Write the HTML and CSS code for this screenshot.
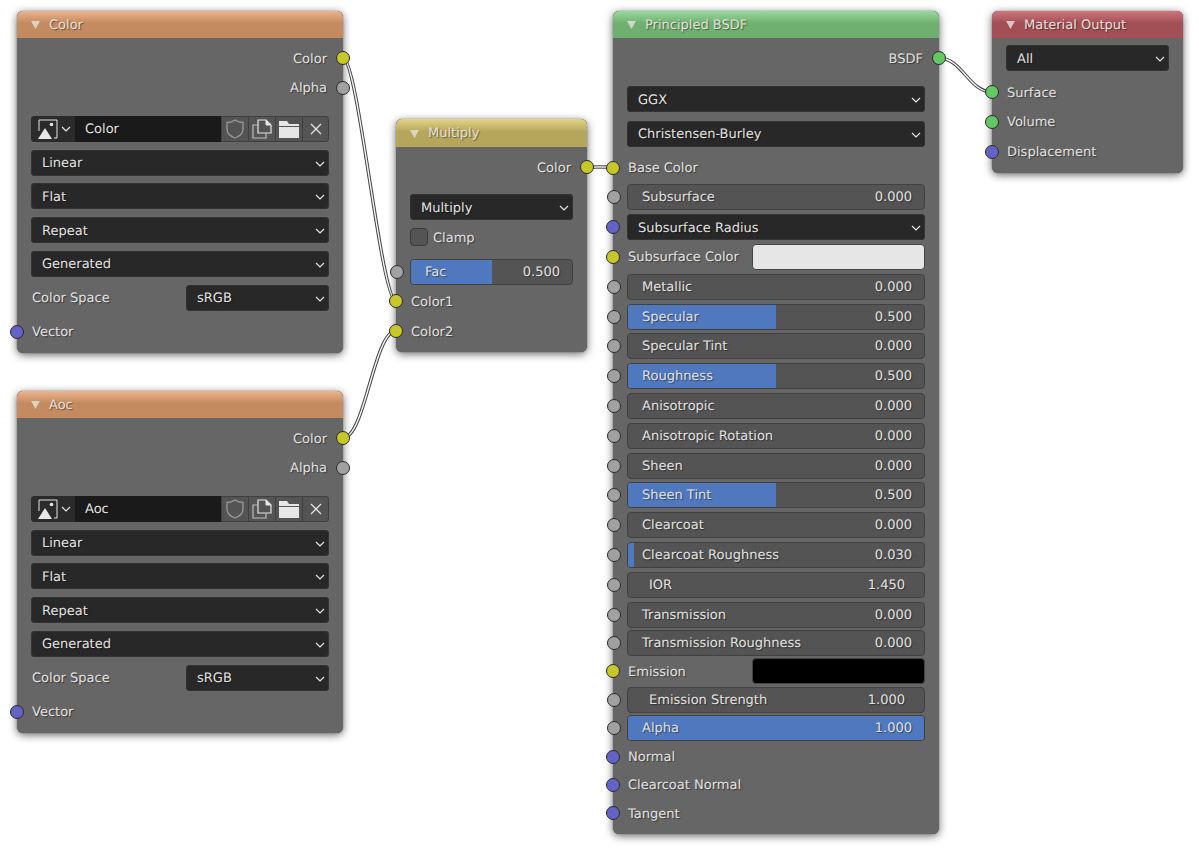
FILE: index.html
```html
<!DOCTYPE html>
<html lang="en">
<head>
    <meta charset="UTF-8">
    <title>Shader nodes</title>
    <link rel="stylesheet" href="styles.css">
</head>
<body>
    <!-- icons used more than once -->
    <svg class="defs" width="0" height="0">
        <symbol id="chev" viewBox="0 0 10 6"><path d="M1 1l4 4 4-4" fill="none" stroke="#e6e6e6" stroke-width="1.2"/></symbol>
        <symbol id="tri" viewBox="0 0 9 8"><path d="M0 0h9L4.5 8z" fill="currentColor"/></symbol>
        <symbol id="picture" viewBox="0 0 20 20"><path d="M1 12V1h18v18h-3" fill="none" stroke="#e6e6e6" stroke-width="1"/><circle cx="13.5" cy="5.5" r="1.8" fill="#e6e6e6"/><path d="M0 20L7 9l7 11z" fill="#e6e6e6"/></symbol>
        <symbol id="shield" viewBox="0 0 18 20"><path d="M1 3.5C4 3.5 7 2.5 9 1c2 1.5 5 2.500 8 2.500V10c0 4.500-4 7.500-8 9-4-1.500-8-4.500-8-9z" fill="none" stroke="#9a9a9a" stroke-width="1.300"/></symbol>
        <symbol id="copy" viewBox="0 0 20 20"><path d="M6 14V1h8l5 5v8z" fill="none" stroke="#e6e6e6" stroke-width="1.200"/><path d="M14 1v5h5" fill="#e6e6e6" stroke="#e6e6e6"/><path d="M6 6H1v13h13v-5" fill="none" stroke="#bdbdbd" stroke-width="1.200"/></symbol>
        <symbol id="folder" viewBox="0 0 20 18"><path d="M0 1h8l2 3h10v2H0zM0 7h20v11H0z" fill="#e6e6e6"/></symbol>
        <symbol id="cross" viewBox="0 0 12 12"><path d="M1 1l10 10M11 1L1 11" fill="none" stroke="#e6e6e6" stroke-width="1.300"/></symbol>
    </svg>

    <div class="canvas">
        <svg class="wires" width="1199" height="860">
            <g class="wire-edge">
                <path d="M343 58C358 58 381 301 396 301"/>
                <path d="M343 438C365 438 374 331 396 331"/>
                <path d="M587 167H613"/>
                <path d="M939 58C962 58 969 92 992 92"/>
            </g>
            <g class="wire-core">
                <path d="M343 58C358 58 381 301 396 301"/>
                <path d="M343 438C365 438 374 331 396 331"/>
                <path d="M587 167H613"/>
                <path d="M939 58C962 58 969 92 992 92"/>
            </g>
        </svg>

        <!-- image texture 1 -->
        <div class="node node-color">
            <div class="node-head head-orange"><svg class="tri"><use href="#tri"/></svg>Color</div>
            <div class="node-body">
                <div class="row out">Color<span class="socket s-out yellow"></span></div>
                <div class="row out">Alpha<span class="socket s-out gray"></span></div>
                <div class="row imgsel">
                    <div class="img-pick"><svg class="ic-pic"><use href="#picture"/></svg><svg class="chev"><use href="#chev"/></svg></div>
                    <div class="img-name">Color</div>
                    <div class="img-btn"><svg class="ic-shield"><use href="#shield"/></svg></div>
                    <div class="img-btn"><svg class="ic-copy"><use href="#copy"/></svg></div>
                    <div class="img-btn"><svg class="ic-folder"><use href="#folder"/></svg></div>
                    <div class="img-btn"><svg class="ic-cross"><use href="#cross"/></svg></div>
                </div>
                <div class="row wide drop">Linear<svg class="chev"><use href="#chev"/></svg></div>
                <div class="row wide drop">Flat<svg class="chev"><use href="#chev"/></svg></div>
                <div class="row wide drop">Repeat<svg class="chev"><use href="#chev"/></svg></div>
                <div class="row wide drop">Generated<svg class="chev"><use href="#chev"/></svg></div>
                <div class="row wide split"><span class="in-label">Color Space</span><div class="drop drop-half">sRGB<svg class="chev"><use href="#chev"/></svg></div></div>
                <div class="row wide in"><span class="socket s-in purple"></span>Vector</div>
            </div>
        </div>

        <!-- image texture 2 -->
        <div class="node node-aoc">
            <div class="node-head head-orange"><svg class="tri"><use href="#tri"/></svg>Aoc</div>
            <div class="node-body">
                <div class="row out">Color<span class="socket s-out yellow"></span></div>
                <div class="row out">Alpha<span class="socket s-out gray"></span></div>
                <div class="row imgsel">
                    <div class="img-pick"><svg class="ic-pic"><use href="#picture"/></svg><svg class="chev"><use href="#chev"/></svg></div>
                    <div class="img-name">Aoc</div>
                    <div class="img-btn"><svg class="ic-shield"><use href="#shield"/></svg></div>
                    <div class="img-btn"><svg class="ic-copy"><use href="#copy"/></svg></div>
                    <div class="img-btn"><svg class="ic-folder"><use href="#folder"/></svg></div>
                    <div class="img-btn"><svg class="ic-cross"><use href="#cross"/></svg></div>
                </div>
                <div class="row wide drop">Linear<svg class="chev"><use href="#chev"/></svg></div>
                <div class="row wide drop">Flat<svg class="chev"><use href="#chev"/></svg></div>
                <div class="row wide drop">Repeat<svg class="chev"><use href="#chev"/></svg></div>
                <div class="row wide drop">Generated<svg class="chev"><use href="#chev"/></svg></div>
                <div class="row wide split"><span class="in-label">Color Space</span><div class="drop drop-half">sRGB<svg class="chev"><use href="#chev"/></svg></div></div>
                <div class="row wide in"><span class="socket s-in purple"></span>Vector</div>
            </div>
        </div>

        <!-- mix -->
        <div class="node node-mix">
            <div class="node-head head-yellow"><svg class="tri"><use href="#tri"/></svg>Multiply</div>
            <div class="node-body">
                <div class="row out">Color<span class="socket s-out yellow"></span></div>
                <div class="row mix-first drop">Multiply<svg class="chev"><use href="#chev"/></svg></div>
                <div class="row check"><span class="box"></span><span class="check-label">Clamp</span></div>
                <div class="row field mix-fac"><span class="socket s-in gray"></span><span class="fill" style="width:50%"></span><span class="lbl">Fac</span><span class="val">0.500</span></div>
                <div class="row in"><span class="socket s-in yellow"></span>Color1</div>
                <div class="row in"><span class="socket s-in yellow"></span>Color2</div>
            </div>
        </div>

        <!-- principled -->
        <div class="node node-bsdf">
            <div class="node-head head-green"><svg class="tri"><use href="#tri"/></svg>Principled BSDF</div>
            <div class="node-body">
                <div class="row out">BSDF<span class="socket s-out green"></span></div>
                <div class="row bsdf-first drop">GGX<svg class="chev"><use href="#chev"/></svg></div>
                <div class="row wide drop">Christensen-Burley<svg class="chev"><use href="#chev"/></svg></div>
                <div class="row wide in"><span class="socket s-in yellow"></span>Base Color</div>
                <div class="row field"><span class="socket s-in gray"></span><span class="lbl">Subsurface</span><span class="val">0.000</span></div>
                <div class="row drop"><span class="socket s-in purple"></span>Subsurface Radius<svg class="chev"><use href="#chev"/></svg></div>
                <div class="row in"><span class="socket s-in yellow"></span>Subsurface Color<span class="swatch swatch-light"></span></div>
                <div class="row field"><span class="socket s-in gray"></span><span class="lbl">Metallic</span><span class="val">0.000</span></div>
                <div class="row field"><span class="socket s-in gray"></span><span class="fill" style="width:50%"></span><span class="lbl">Specular</span><span class="val">0.500</span></div>
                <div class="row field"><span class="socket s-in gray"></span><span class="lbl">Specular Tint</span><span class="val">0.000</span></div>
                <div class="row field"><span class="socket s-in gray"></span><span class="fill" style="width:50%"></span><span class="lbl">Roughness</span><span class="val">0.500</span></div>
                <div class="row field"><span class="socket s-in gray"></span><span class="lbl">Anisotropic</span><span class="val">0.000</span></div>
                <div class="row field"><span class="socket s-in gray"></span><span class="lbl">Anisotropic Rotation</span><span class="val">0.000</span></div>
                <div class="row field"><span class="socket s-in gray"></span><span class="lbl">Sheen</span><span class="val">0.000</span></div>
                <div class="row field"><span class="socket s-in gray"></span><span class="fill" style="width:50%"></span><span class="lbl">Sheen Tint</span><span class="val">0.500</span></div>
                <div class="row field"><span class="socket s-in gray"></span><span class="lbl">Clearcoat</span><span class="val">0.000</span></div>
                <div class="row field"><span class="socket s-in gray"></span><span class="fill" style="width:2%"></span><span class="lbl">Clearcoat Roughness</span><span class="val">0.030</span></div>
                <div class="row field unbounded"><span class="socket s-in gray"></span><span class="lbl">IOR</span><span class="val">1.450</span></div>
                <div class="row field"><span class="socket s-in gray"></span><span class="lbl">Transmission</span><span class="val">0.000</span></div>
                <div class="row tight field"><span class="socket s-in gray"></span><span class="lbl">Transmission Roughness</span><span class="val">0.000</span></div>
                <div class="row tight in"><span class="socket s-in yellow"></span>Emission<span class="swatch swatch-black"></span></div>
                <div class="row tight field unbounded"><span class="socket s-in gray"></span><span class="lbl">Emission Strength</span><span class="val">1.000</span></div>
                <div class="row tight field"><span class="socket s-in gray"></span><span class="fill" style="width:100%"></span><span class="lbl">Alpha</span><span class="val">1.000</span></div>
                <div class="row tight in"><span class="socket s-in purple"></span>Normal</div>
                <div class="row tight in"><span class="socket s-in purple"></span>Clearcoat Normal</div>
                <div class="row tight in"><span class="socket s-in purple"></span>Tangent</div>
            </div>
        </div>

        <!-- output -->
        <div class="node node-output">
            <div class="node-head head-red"><svg class="tri"><use href="#tri"/></svg>Material Output</div>
            <div class="node-body">
                <div class="row drop">All<svg class="chev"><use href="#chev"/></svg></div>
                <div class="row in output-surface"><span class="socket s-in green"></span>Surface</div>
                <div class="row in"><span class="socket s-in green"></span>Volume</div>
                <div class="row in"><span class="socket s-in purple"></span>Displacement</div>
            </div>
        </div>
    </div>
</body>
</html>
```

FILE: styles.css
```css
/* page */
body {
    margin: 0;
    background: #fff;
    font-family: "DejaVu Sans", sans-serif;
    font-size: 13px;
    text-rendering: geometricPrecision;
    color: #e2e2e2;
}

.defs {
    position: absolute;
}

.canvas {
    position: relative;
    width: 1199px;
    height: 860px;
    overflow: hidden;
}

/* links between the nodes */
.wires {
    position: absolute;
    left: 0;
    top: 0;
}

.wires path {
    fill: none;
}

.wire-edge path {
    stroke: #444;
    stroke-width: 3.4;
}

.wire-core path {
    stroke: #f6f6f6;
    stroke-width: 1.4;
}

/* nodes sit freely on the canvas */
.node {
    position: absolute;
    box-sizing: border-box;
    background: #666;
    border-radius: 6px;
    box-shadow: 0 2px 8px rgba(0, 0, 0, 0.6), 0 0 1px rgba(40, 40, 40, 0.8);
}

.node-color { left: 17px; top: 11px; width: 326px; height: 342px; }
.node-aoc { left: 17px; top: 391px; width: 326px; height: 342px; }
.node-mix { left: 396px; top: 119px; width: 191px; height: 233px; }
.node-bsdf { left: 613px; top: 11px; width: 326px; height: 823px; }
.node-output { left: 992px; top: 11px; width: 191px; height: 162px; }

.node-head {
    display: flex;
    align-items: center;
    height: 27px;
    padding: 1px 0 0 14px;
    box-sizing: border-box;
    border-radius: 6px 6px 0 0;
    color: #e4e0dc;
    text-shadow: 1px 1px 1px rgba(0, 0, 0, 0.45);
}

.head-orange { background: linear-gradient(#ecb48e, #c48a60 45%); }
.head-yellow { background: linear-gradient(#e2d488, #b5a65c 45%); }
.head-green { background: linear-gradient(#9ad99c, #6fb071 45%); }
.head-red { background: linear-gradient(#d0757c, #a24f56 45%); }

.node-mix .node-head {
    height: 28px;
}

.tri {
    width: 9px;
    height: 8px;
    margin-right: 9px;
    color: #e8e2da;
    opacity: 0.8;
}

.node-body {
    padding: 7px 14px 0;
}

/* rows */
.row {
    position: relative;
    display: flex;
    align-items: center;
    box-sizing: border-box;
    height: 26px;
    padding-top: 2px;
    margin-top: 3.8px;
    text-shadow: 1px 1px 1px rgba(0, 0, 0, 0.45);
}

.row:first-child { margin-top: 0; }
.row.wide { margin-top: 7.8px; }
.row.tight { margin-top: 2.4px; }
.row.imgsel { margin-top: 15px; padding-top: 0; }
.row.split { padding-top: 0; }
.row.mix-first { margin-top: 14px; }
.row.bsdf-first { margin-top: 15px; }
.row.bsdf-first + .wide { margin-top: 8.8px; }
.row.output-surface { margin-top: 8px; }
.row.check { margin-top: 4px; padding-top: 0; }
.row.mix-fac { margin-top: 8.5px; }

.out {
    justify-content: flex-end;
    padding-right: 2px;
}

.in {
    padding-left: 1px;
}

/* sockets */
.socket {
    position: absolute;
    top: 50%;
    width: 12px;
    height: 12px;
    margin-top: -7px;
    border: 1px solid #2b2b2b;
    border-radius: 50%;
}

.s-in { left: -21px; }
.s-out { right: -21px; }

.yellow { background: #c7c729; }
.gray { background: #a1a1a1; }
.purple { background: #6363c7; }
.green { background: #63c763; }

/* dropdowns */
.drop {
    box-sizing: border-box;
    display: flex;
    align-items: center;
    justify-content: space-between;
    padding: 2px 4px 0 11px;
    background: #282828;
    border-radius: 4px;
    box-shadow: inset 0 0 0 1px #333;
}

.drop-half {
    width: 143px;
    height: 26px;
}

.split {
    justify-content: space-between;
}

.in-label {
    padding: 2px 0 0 1px;
}

.chev {
    width: 10px;
    height: 6px;
    flex: none;
}

/* number fields */
.field {
    justify-content: space-between;
    padding: 1px 12px 0 14px;
    background: #545454;
    border: 1px solid #414141;
    border-radius: 4px;
}

.field.unbounded {
    padding: 1px 19px 0 21px;
}

.fill {
    position: absolute;
    left: 0;
    top: 0;
    bottom: 0;
    background: #4f78bf;
    border-radius: 3px 0 0 3px;
}

.fill[style="width:100%"] {
    border-radius: 3px;
}

.lbl,
.val {
    position: relative;
}

/* colour swatches */
.swatch {
    position: absolute;
    right: 0;
    top: 0;
    width: 173px;
    height: 26px;
    border-radius: 4px;
    box-sizing: border-box;
    border: 1px solid #444;
}

.swatch-light { background: #e6e6e6; }
.swatch-black { background: #000; }

/* checkbox */
.check {
    gap: 5px;
}

.check-label {
    padding-top: 2px;
}

.box {
    box-sizing: border-box;
    width: 18px;
    height: 18px;
    background: #545454;
    border: 1px solid #3a3a3a;
    border-radius: 4px;
}

/* image selector */
.imgsel {
    background: #545454;
    border-radius: 4px;
    box-shadow: inset 0 0 0 1px #3f3f3f;
}

.img-pick {
    display: flex;
    align-items: center;
    justify-content: space-between;
    box-sizing: border-box;
    width: 44px;
    height: 26px;
    padding: 0 4px 0 7px;
    background: #2b2b2b;
    border-radius: 4px 0 0 4px;
}

.ic-pic {
    width: 20px;
    height: 20px;
}

.img-name {
    flex: 1;
    height: 26px;
    line-height: 28px;
    padding-left: 10px;
    background: #1a1a1a;
}

.img-btn {
    display: flex;
    align-items: center;
    justify-content: center;
    width: 27px;
    height: 26px;
    border-left: 1px solid #3f3f3f;
    box-sizing: border-box;
}

.ic-shield { width: 18px; height: 20px; }
.ic-copy { width: 20px; height: 20px; }
.ic-folder { width: 20px; height: 18px; }
.ic-cross { width: 12px; height: 12px; }
```
